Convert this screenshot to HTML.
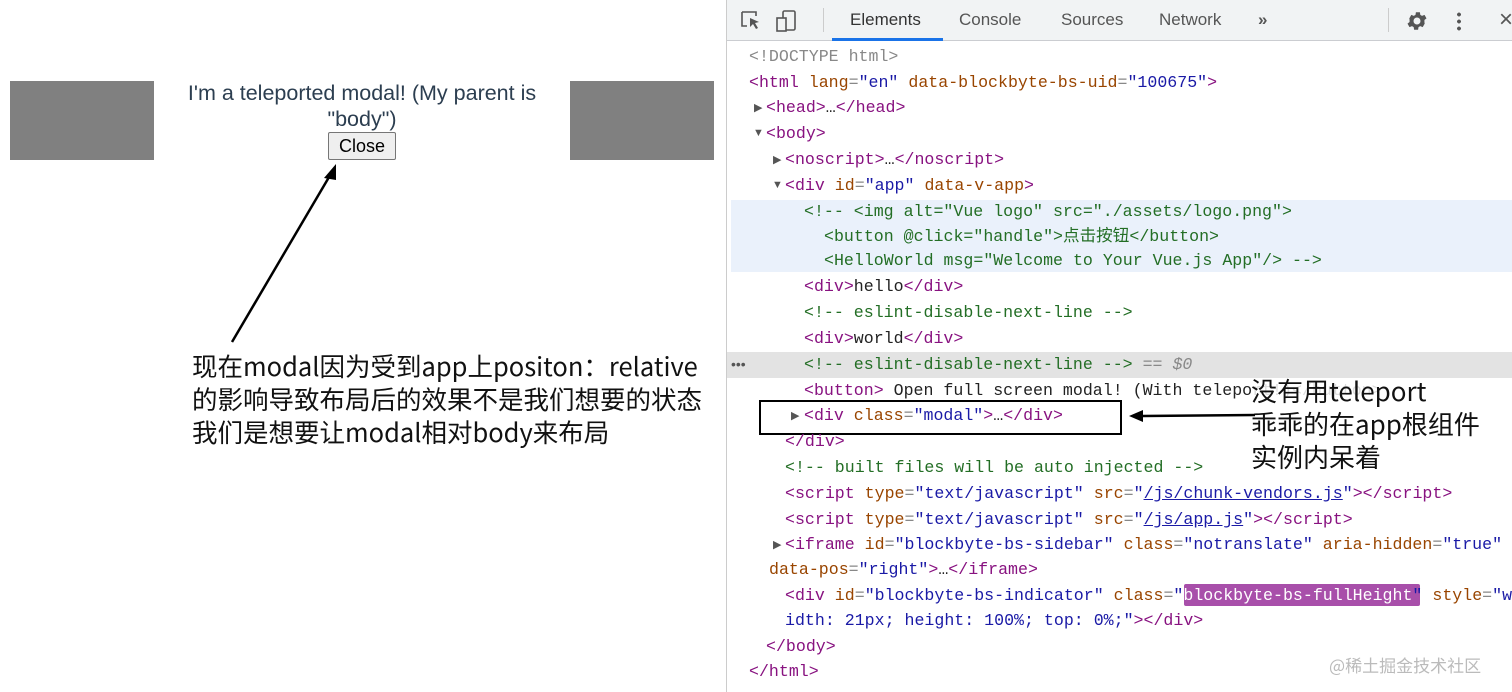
<!DOCTYPE html>
<html><head><meta charset="utf-8"><style>
*{margin:0;padding:0;box-sizing:border-box}
body{width:1512px;height:692px;background:#fff;position:relative;overflow:hidden;font-family:"Liberation Sans",sans-serif}
.g{position:absolute;background:#808080}
.dt{position:absolute;left:726px;top:0;width:786px;height:692px;border-left:1px solid #ccc;background:#fff}
.tb{position:absolute;left:0;top:0;width:786px;height:41px;background:#f1f3f4;border-bottom:1px solid #cbcdd1}
.tab{position:absolute;top:10px;font-size:17px;color:#333}
.l{position:absolute;font-family:"Liberation Mono","Noto Sans CJK SC",monospace;font-size:16.6px;line-height:24px;white-space:pre;color:#881280;height:24px}
.t{color:#881280}.a{color:#994500}.v{color:#1a1aa6}.c{color:#236e25}.p{color:#888}.k{color:#222}
.tri{position:absolute;font-size:11px;color:#555}
.cn{position:absolute;font-family:"Noto Sans CJK SC",sans-serif;color:#111;white-space:nowrap}
</style></head><body>
<div class="g" style="left:10px;top:81px;width:144px;height:79px"></div>
<div class="g" style="left:570px;top:81px;width:144px;height:79px"></div>
<div style="position:absolute;left:176px;top:80px;width:372px;text-align:center;font-size:21.5px;line-height:26px;color:#2c3e50">I'm a teleported modal! (My parent is "body")</div>
<div style="position:absolute;left:328px;top:132px;width:68px;height:28px;border:1px solid #767676;border-radius:2px;background:#efefef;font-size:18px;text-align:center;line-height:26px;color:#000">Close</div>
<svg style="position:absolute;left:0;top:0" width="726" height="692"><line x1="232" y1="342" x2="332" y2="172" stroke="#000" stroke-width="2.5"/><polygon points="336,164 324,178 336,180" fill="#000"/></svg>
<div class="cn" style="left:192px;top:349px;font-size:25.5px;line-height:33px">现在modal因为受到app上positon：relative<br>的影响导致布局后的效果不是我们想要的状态<br>我们是想要让modal相对body来布局</div>

<div class="dt">
<div class="tb">
<svg style="position:absolute;left:14px;top:10px" width="60" height="22"><path d="M1 2h14v4M1 2v14h5" fill="none" stroke="#555" stroke-width="1.6"/><path d="M9 8l9 4-4 1 3 5-2 1-3-5-3 3z" fill="#555"/><rect x="42" y="1" width="12" height="19" rx="1.5" fill="none" stroke="#555" stroke-width="1.6"/><rect x="36" y="8" width="9" height="13" fill="#f1f3f4" stroke="#555" stroke-width="1.6"/></svg>
<div style="position:absolute;left:96px;top:8px;width:1px;height:24px;background:#ccc"></div>
<div class="tab" style="left:123px">Elements</div>
<div style="position:absolute;left:105px;top:38px;width:111px;height:3px;background:#1a73e8"></div>
<div class="tab" style="left:232px;color:#555">Console</div>
<div class="tab" style="left:334px;color:#555">Sources</div>
<div class="tab" style="left:432px;color:#555">Network</div>
<div class="tab" style="left:531px;color:#555;font-weight:bold">»</div>
<div style="position:absolute;left:661px;top:8px;width:1px;height:24px;background:#ccc"></div>
<svg style="position:absolute;left:678px;top:9px" width="24" height="24" viewBox="0 0 24 24"><path fill="#555" d="M19.4 13a7.5 7.5 0 000-2l2.1-1.6-2-3.5-2.5 1a7 7 0 00-1.7-1l-.4-2.7h-4l-.4 2.7a7 7 0 00-1.7 1l-2.5-1-2 3.5L4.6 11a7.5 7.5 0 000 2l-2.1 1.6 2 3.5 2.5-1a7 7 0 001.7 1l.4 2.7h4l.4-2.7a7 7 0 001.7-1l2.5 1 2-3.5zM12 15.5a3.5 3.5 0 110-7 3.5 3.5 0 010 7z"/></svg>
<div style="position:absolute;left:730px;top:11px;width:4px;height:20px;background:radial-gradient(circle,#555 1.8px,transparent 2px) 0 0/4px 7px"></div>
<div style="position:absolute;left:772px;top:6px;font-size:24px;color:#555">×</div>
</div>
<div style="position:absolute;left:4px;top:200px;width:782px;height:72px;background:#eaf1fb"></div>
<div style="position:absolute;left:0;top:352px;width:786px;height:26px;background:#e3e3e3"></div>
<div style="position:absolute;left:4px;top:356px;font-size:14px;color:#555">•••</div>
<div style="position:absolute;left:32px;top:400px;width:363px;height:35px;border:2px solid #000"></div>
<div style="position:absolute;left:457px;top:584px;width:236px;height:22px;background:#a84faa;border-radius:2px"></div>

<div class="l p" style="left:22px;top:45px">&lt;!DOCTYPE html&gt;</div>
<div class="l" style="left:22px;top:71px">&lt;html <span class="a">lang</span><span class="p">=</span><span class="v">"en"</span> <span class="a">data-blockbyte-bs-uid</span><span class="p">=</span><span class="v">"100675"</span>&gt;</div>
<div class="tri" style="left:27px;top:101px">▶</div><div class="l" style="left:39px;top:96px">&lt;head&gt;<span class="k">…</span>&lt;/head&gt;</div>
<div class="tri" style="left:26px;top:127px">▼</div><div class="l" style="left:39px;top:122px">&lt;body&gt;</div>
<div class="tri" style="left:46px;top:153px">▶</div><div class="l" style="left:58px;top:148px">&lt;noscript&gt;<span class="k">…</span>&lt;/noscript&gt;</div>
<div class="tri" style="left:45px;top:179px">▼</div><div class="l" style="left:58px;top:174px">&lt;div <span class="a">id</span><span class="p">=</span><span class="v">"app"</span> <span class="a">data-v-app</span>&gt;</div>
<div class="l c" style="left:77px;top:200px">&lt;!-- &lt;img alt="Vue logo" src="./assets/logo.png"&gt;</div>
<div class="l c" style="left:97px;top:225px">&lt;button @click="handle"&gt;点击按钮&lt;/button&gt;</div>
<div class="l c" style="left:97px;top:249px">&lt;HelloWorld msg="Welcome to Your Vue.js App"/&gt; --&gt;</div>
<div class="l" style="left:77px;top:275px">&lt;div&gt;<span class="k">hello</span>&lt;/div&gt;</div>
<div class="l c" style="left:77px;top:301px">&lt;!-- eslint-disable-next-line --&gt;</div>
<div class="l" style="left:77px;top:327px">&lt;div&gt;<span class="k">world</span>&lt;/div&gt;</div>
<div class="l c" style="left:77px;top:353px">&lt;!-- eslint-disable-next-line --&gt; <span class="p">== <i>$0</i></span></div>
<div class="l" style="left:77px;top:379px">&lt;button&gt;<span class="k"> Open full screen modal! (With telepo</span><span style="color:#ddd">rt!)&lt;/button&gt;</span></div>
<div class="tri" style="left:64px;top:409px">▶</div><div class="l" style="left:77px;top:404px">&lt;div <span class="a">class</span><span class="p">=</span><span class="v">"modal"</span>&gt;<span class="k">…</span>&lt;/div&gt;</div>
<div class="l" style="left:58px;top:430px">&lt;/div&gt;</div>
<div class="l c" style="left:58px;top:456px">&lt;!-- built files will be auto injected --&gt;</div>
<div class="l" style="left:58px;top:482px">&lt;script <span class="a">type</span><span class="p">=</span><span class="v">"text/javascript"</span> <span class="a">src</span><span class="p">=</span><span class="v">"<u>/js/chunk-vendors.js</u>"</span>&gt;&lt;/script&gt;</div>
<div class="l" style="left:58px;top:508px">&lt;script <span class="a">type</span><span class="p">=</span><span class="v">"text/javascript"</span> <span class="a">src</span><span class="p">=</span><span class="v">"<u>/js/app.js</u>"</span>&gt;&lt;/script&gt;</div>
<div class="tri" style="left:46px;top:538px">▶</div><div class="l" style="left:58px;top:533px">&lt;iframe <span class="a">id</span><span class="p">=</span><span class="v">"blockbyte-bs-sidebar"</span> <span class="a">class</span><span class="p">=</span><span class="v">"notranslate"</span> <span class="a">aria-hidden</span><span class="p">=</span><span class="v">"true"</span></div>
<div class="l" style="left:42px;top:558px"><span class="a">data-pos</span><span class="p">=</span><span class="v">"right"</span>&gt;<span class="k">…</span>&lt;/iframe&gt;</div>
<div class="l" style="left:58px;top:584px">&lt;div <span class="a">id</span><span class="p">=</span><span class="v">"blockbyte-bs-indicator"</span> <span class="a">class</span><span class="p">=</span><span class="v">"<span style="color:#fff">blockbyte-bs-fullHeight</span>"</span> <span class="a">style</span><span class="p">=</span><span class="v">"w</span></div>
<div class="l v" style="left:58px;top:609px">idth: 21px; height: 100%; top: 0%;"<span class="t">&gt;&lt;/div&gt;</span></div>
<div class="l" style="left:39px;top:635px">&lt;/body&gt;</div>
<div class="l" style="left:22px;top:660px">&lt;/html&gt;</div>

<div class="cn" style="left:524px;top:374px;font-size:26px;line-height:33px">没有用teleport<br>乖乖的在app根组件<br>实例内呆着</div>
<svg style="position:absolute;left:400px;top:405px" width="130" height="20"><line x1="14" y1="11" x2="128" y2="10" stroke="#000" stroke-width="2.5"/><polygon points="2,11 16,5 16,17" fill="#000"/></svg>
<div class="cn" style="left:602px;top:652px;font-size:17px;color:#bbb">@稀土掘金技术社区</div>
</div>
</body></html>
